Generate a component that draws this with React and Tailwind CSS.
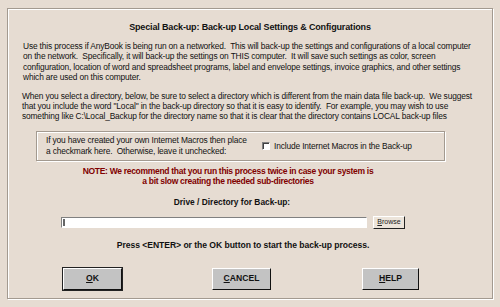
export default function App() {
  return (
    <div className="w-[500px] h-[307px] bg-[#e6dcd2] pt-[8px] px-[7px] font-['Liberation_Sans',Arial,sans-serif] text-[#111]">
      <div className="h-[291px] border border-[#a39a90] shadow-[inset_1px_1px_0_#fff,1px_1px_0_#fff] flex flex-col">
        <h1 className="mt-[13px] text-center text-[9px] font-bold leading-[11px] tracking-[-0.15px] whitespace-nowrap">
          Special Back-up: Back-up Local Settings &amp; Configurations
        </h1>

        <p className="mt-[8px] ml-[15px] text-[8.4px] leading-[10.4px] tracking-[-0.15px] whitespace-nowrap">
          Use this process if AnyBook is being run on a networked.&nbsp; This will back-up the settings and configurations of a local computer<br />
          on the network.&nbsp; Specifically, it will back-up the settings on THIS computer.&nbsp; It will save such settings as color, screen<br />
          configuration, location of word and spreadsheet programs, label and envelope settings, invoice graphics, and other settings<br />
          which are used on this computer.
        </p>

        <p className="mt-[8px] ml-[14px] text-[8.4px] leading-[10.4px] tracking-[-0.15px] whitespace-nowrap">
          When you select a directory, below, be sure to select a directory which is different from the main data file back-up.&nbsp; We suggest<br />
          that you include the word "Local" in the back-up directory so that it is easy to identify.&nbsp; For example, you may wish to use<br />
          something like C:\Local_Backup for the directory name so that it is clear that the directory contains LOCAL back-up files
        </p>

        <div className="mt-[9px] ml-[28px] w-[409px] h-[30px] border border-[#a39a90] shadow-[inset_1px_1px_0_#fff,1px_1px_0_#fff] flex items-center text-[8.4px] leading-[10.4px] tracking-[-0.15px] whitespace-nowrap">
          <div className="ml-[9px] w-[208px]">
            If you have created your own Internet Macros then place<br />
            a checkmark here.&nbsp; Otherwise, leave it unchecked:
          </div>
          <label className="ml-[8px] flex items-center gap-[4px]">
            <span className="w-[8px] h-[8px] bg-white border border-t-[#808080] border-l-[#808080] border-b-[#fff] border-r-[#fff] shadow-[inset_1px_1px_0_#404040]" />
            <span>Include Internet Macros in the Back-up</span>
          </label>
        </div>

        <p className="mt-[5px] ml-[20px] w-[400px] text-center text-[8.5px] leading-[10px] font-bold text-[#800000] tracking-[-0.3px] whitespace-nowrap">
          NOTE: We recommend that you run this process twice in case your system is<br />
          a bit slow creating the needed sub-directories
        </p>

        <div className="mt-[11px] ml-[24px] w-[400px] text-center text-[8.4px] font-bold leading-[10px] whitespace-nowrap">
          Drive / Directory for Back-up:
        </div>

        <div className="mt-[9px] ml-[53px] flex items-center gap-[6px]">
          <div className="w-[306px] h-[11px] bg-white border border-t-[#808080] border-l-[#808080] border-b-[#fff] border-r-[#fff] flex items-center pl-[1px]">
            <span className="w-[2px] h-[7px] border border-[#666]" />
          </div>
          <button className="w-[32px] h-[13px] bg-[#ece4da] border border-t-[#fff] border-l-[#fff] border-b-[#222] border-r-[#222] text-[7px] leading-[10px] text-[#222]">
            <span className="underline">B</span>rowse
          </button>
        </div>

        <div className="mt-[11px] ml-[35px] w-[400px] text-center text-[8.6px] font-bold leading-[10px] tracking-[-0.05px] whitespace-nowrap">
          Press &lt;ENTER&gt; or the OK button to start the back-up process.
        </div>

        <div className="mt-[18px] flex">
          <button className="ml-[55px] w-[59px] h-[22px] bg-[#c3c3c3] border border-t-[#fff] border-l-[#fff] border-b-[#111] border-r-[#111] shadow-[0_0_0_1px_#222] text-[8.6px] font-bold">
            <span className="underline">O</span>K
          </button>
          <button className="ml-[90px] w-[59px] h-[22px] bg-[#c3c3c3] border border-t-[#fff] border-l-[#fff] border-b-[#111] border-r-[#111] text-[8.6px] font-bold">
            <span className="underline">C</span>ANCEL
          </button>
          <button className="ml-[91px] w-[57px] h-[22px] bg-[#c3c3c3] border border-t-[#fff] border-l-[#fff] border-b-[#111] border-r-[#111] text-[8.6px] font-bold">
            <span className="underline">H</span>ELP
          </button>
        </div>
      </div>
    </div>
  );
}
